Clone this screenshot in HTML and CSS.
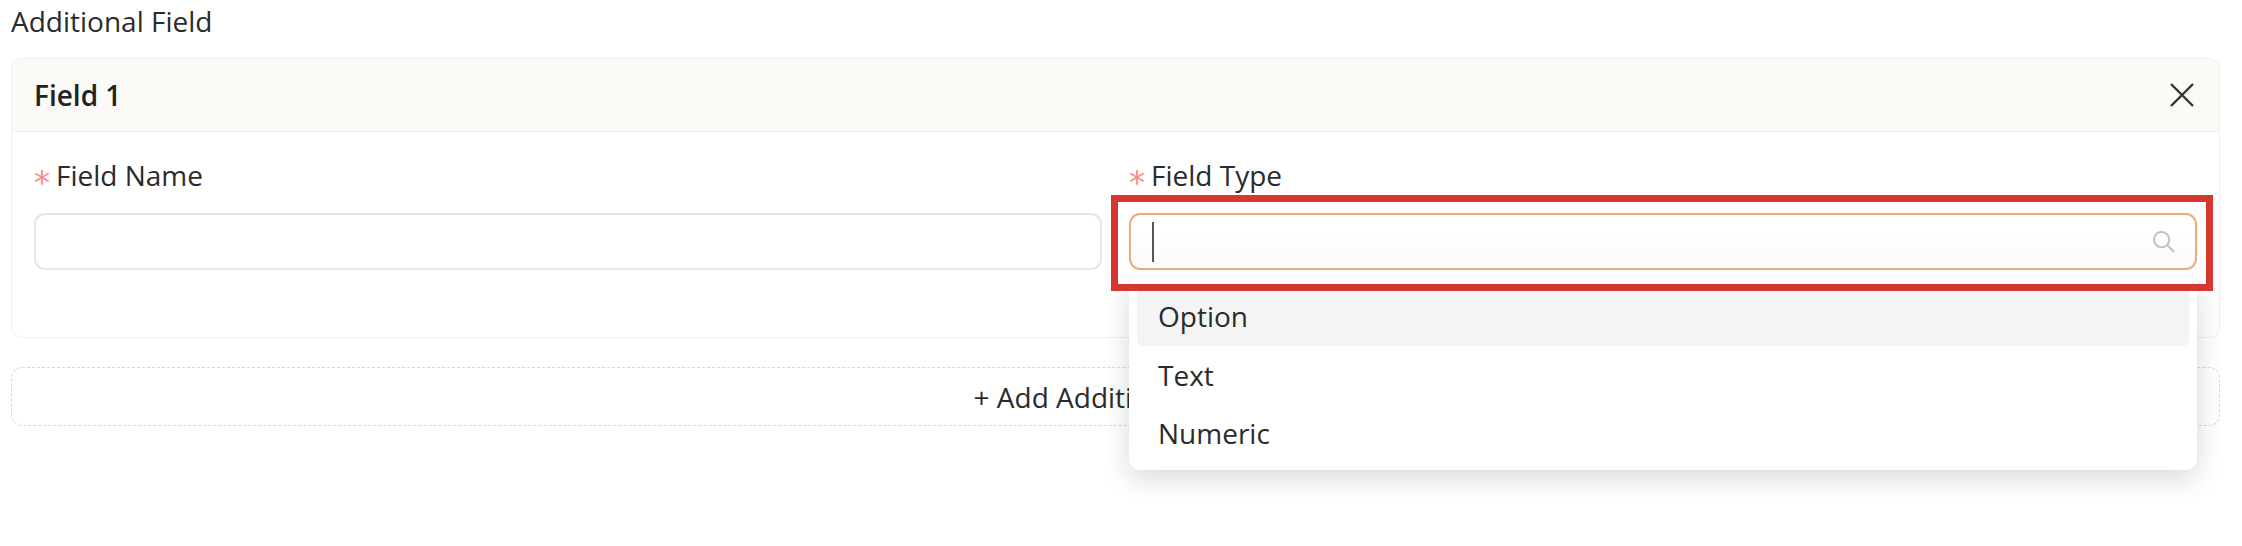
FILE: index.html
```html
<!DOCTYPE html>
<html lang="en">
<head>
<meta charset="utf-8">
<title>Additional Field</title>
<link rel="stylesheet" href="styles.css">
</head>
<body>
<main class="page">
  <div class="section-title">Additional Field</div>
  <section class="card">
    <header class="card-head">
      <span class="card-title">Field 1</span>
      <svg class="close" viewBox="0 0 24 24" aria-hidden="true"><path d="M1 1 23 23M23 1 1 23"/></svg>
    </header>
    <div class="card-body">
      <div class="field">
        <label class="label"><span class="req">*</span>Field Name</label>
        <div class="input"></div>
      </div>
      <div class="field field-open">
        <label class="label"><span class="req">*</span>Field Type</label>
        <div class="input input-focus">
          <span class="caret"></span>
          <svg class="search" viewBox="0 0 24 24" aria-hidden="true"><circle cx="10" cy="10" r="8"/><path d="M16 16 23 23"/></svg>
        </div>
        <div class="menu-clip">
          <ul class="menu">
            <li class="opt opt-active">Option</li>
            <li class="opt">Text</li>
            <li class="opt">Numeric</li>
          </ul>
        </div>
        <div class="highlight"></div>
      </div>
    </div>
  </section>
  <button class="add">+ Add Additional Field</button>
</main>
</body>
</html>
```
FILE: styles.css
```css
* { box-sizing: border-box; }
html, body { margin: 0; background: #fff; }
body {
  width: 2242px;
  height: 546px;
  overflow: hidden;
  font-family: "Open Sans", "Noto Sans", sans-serif;
  font-size: 28px;
  color: #2b2b2b;
}
.page { padding: 0 22px 0 11px; }
.section-title { height: 58px; padding-top: 4px; line-height: 34px; }
.card {
  border: 1.5px solid #f0efed;
  border-radius: 11px;
  height: 280px;
}
.card-head {
  height: 73px;
  display: flex;
  align-items: center;
  justify-content: space-between;
  padding: 0 25px 0 22px;
  background: #fbfaf6;
  border-bottom: 1.5px solid #efeeec;
  border-radius: 10px 10px 0 0;
}
.card-title { font-weight: 600; color: #222; }
.close { width: 24px; height: 24px; }
.close path { fill: none; stroke: #333; stroke-width: 2.4; }
.card-body {
  display: grid;
  grid-template-columns: 1fr 1fr;
  column-gap: 27px;
  padding: 25px 22px 0 22px;
}
.field { position: relative; }
.label { display: block; height: 56px; padding-top: 1px; line-height: 34px; }
.req {
  font-family: "DejaVu Sans", sans-serif;
  font-size: 32px;
  line-height: 1;
  vertical-align: -7px;
  color: #f58a8a;
  margin-right: 6px;
}
.input {
  position: relative;
  height: 57px;
  border: 2px solid #e7e6e4;
  border-radius: 11px;
  background: #fff;
}
.input-focus {
  border-color: #eeaa78;
  background: linear-gradient(#fff 40%, #f9f9f8);
  display: flex;
  align-items: center;
  justify-content: space-between;
  padding: 0 20px 0 21px;
}
.caret { width: 2px; height: 40px; background: #555; }
.search { width: 23px; height: 23px; }
.search circle, .search path { fill: none; stroke: #c4c4c4; stroke-width: 2.2; }
.menu-clip {
  position: absolute;
  left: -40px;
  top: 122px;
  width: 1148px;
  height: 218px;
  padding: 0 40px;
  overflow: hidden;
}
.menu {
  list-style: none;
  margin: 0;
  padding: 8px;
  height: 191px;
  background: #fff;
  border-radius: 11px;
  box-shadow: 0 8px 28px rgba(0, 0, 0, .16);
}
.opt {
  height: 58.5px;
  line-height: 59px;
  padding-left: 21px;
  border-radius: 6px;
}
.opt-active { background: #f4f4f4; }
.highlight {
  position: absolute;
  left: -18px;
  top: 38px;
  width: 1102px;
  height: 96px;
  border: 7px solid #d6372e;
  pointer-events: none;
}
.add {
  display: block;
  width: 100%;
  height: 59px;
  margin-top: 29px;
  background: #fff;
  border: 1.5px dashed #d9d9d7;
  border-radius: 11px;
  font: inherit;
  color: inherit;
}
```
